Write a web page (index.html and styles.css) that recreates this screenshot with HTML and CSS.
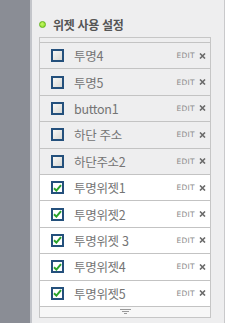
FILE: index.html
```html
<!DOCTYPE html>
<html lang="ko">
<head>
    <meta charset="UTF-8">
    <title>위젯 사용 설정</title>
    <link rel="stylesheet" href="styles.css">
</head>
<body>
    <div class="sidebar"></div>
    <div class="panel">
        <div class="title"><span class="dot"></span>위젯 사용 설정</div>
        <div class="widget-box">
            <ul class="widget-list">
                <li class="row"><span class="check"></span><span class="name">투명4</span><span class="edit">EDIT</span><span class="del"><svg width="7" height="6" viewBox="0 0 7 6"><path d="M1 0.5L6 5.5M6 0.5L1 5.5" stroke="#6a6a6a" stroke-width="1.6"/></svg></span></li>
                <li class="row"><span class="check"></span><span class="name">투명5</span><span class="edit">EDIT</span><span class="del"><svg width="7" height="6" viewBox="0 0 7 6"><path d="M1 0.5L6 5.5M6 0.5L1 5.5" stroke="#6a6a6a" stroke-width="1.6"/></svg></span></li>
                <li class="row"><span class="check"></span><span class="name">button1</span><span class="edit">EDIT</span><span class="del"><svg width="7" height="6" viewBox="0 0 7 6"><path d="M1 0.5L6 5.5M6 0.5L1 5.5" stroke="#6a6a6a" stroke-width="1.6"/></svg></span></li>
                <li class="row"><span class="check"></span><span class="name">하단 주소</span><span class="edit">EDIT</span><span class="del"><svg width="7" height="6" viewBox="0 0 7 6"><path d="M1 0.5L6 5.5M6 0.5L1 5.5" stroke="#6a6a6a" stroke-width="1.6"/></svg></span></li>
                <li class="row"><span class="check"></span><span class="name">하단주소2</span><span class="edit">EDIT</span><span class="del"><svg width="7" height="6" viewBox="0 0 7 6"><path d="M1 0.5L6 5.5M6 0.5L1 5.5" stroke="#6a6a6a" stroke-width="1.6"/></svg></span></li>
                <li class="row on"><span class="check"><svg width="9" height="8" viewBox="0 0 9 8"><path d="M1 4.2L3.4 6.6L8 1.2" fill="none" stroke="#2aa32a" stroke-width="2"/></svg></span><span class="name">투명위젯1</span><span class="edit">EDIT</span><span class="del"><svg width="7" height="6" viewBox="0 0 7 6"><path d="M1 0.5L6 5.5M6 0.5L1 5.5" stroke="#6a6a6a" stroke-width="1.6"/></svg></span></li>
                <li class="row on"><span class="check"><svg width="9" height="8" viewBox="0 0 9 8"><path d="M1 4.2L3.4 6.6L8 1.2" fill="none" stroke="#2aa32a" stroke-width="2"/></svg></span><span class="name">투명위젯2</span><span class="edit">EDIT</span><span class="del"><svg width="7" height="6" viewBox="0 0 7 6"><path d="M1 0.5L6 5.5M6 0.5L1 5.5" stroke="#6a6a6a" stroke-width="1.6"/></svg></span></li>
                <li class="row on"><span class="check"><svg width="9" height="8" viewBox="0 0 9 8"><path d="M1 4.2L3.4 6.6L8 1.2" fill="none" stroke="#2aa32a" stroke-width="2"/></svg></span><span class="name">투명위젯 3</span><span class="edit">EDIT</span><span class="del"><svg width="7" height="6" viewBox="0 0 7 6"><path d="M1 0.5L6 5.5M6 0.5L1 5.5" stroke="#6a6a6a" stroke-width="1.6"/></svg></span></li>
                <li class="row on"><span class="check"><svg width="9" height="8" viewBox="0 0 9 8"><path d="M1 4.2L3.4 6.6L8 1.2" fill="none" stroke="#2aa32a" stroke-width="2"/></svg></span><span class="name">투명위젯4</span><span class="edit">EDIT</span><span class="del"><svg width="7" height="6" viewBox="0 0 7 6"><path d="M1 0.5L6 5.5M6 0.5L1 5.5" stroke="#6a6a6a" stroke-width="1.6"/></svg></span></li>
                <li class="row on"><span class="check"><svg width="9" height="8" viewBox="0 0 9 8"><path d="M1 4.2L3.4 6.6L8 1.2" fill="none" stroke="#2aa32a" stroke-width="2"/></svg></span><span class="name">투명위젯5</span><span class="edit">EDIT</span><span class="del"><svg width="7" height="6" viewBox="0 0 7 6"><path d="M1 0.5L6 5.5M6 0.5L1 5.5" stroke="#6a6a6a" stroke-width="1.6"/></svg></span></li>
            </ul>
            <div class="box-foot">
                <svg width="11" height="6" viewBox="0 0 11 6"><path d="M0 0.5H11M2 2.5H9M4 4.5H7" stroke="#9a9a9a" stroke-width="1"/></svg>
            </div>
        </div>
    </div>
    <div class="rest"></div>
</body>
</html>
```

FILE: styles.css
```css
body {
    margin: 0;
    display: flex;
    height: 323px;
    overflow: hidden;
    font-family: "Noto Sans CJK KR", "Noto Sans", sans-serif;
    background: white;
}
.sidebar {
    width: 30px;
    background: #8a8d95;
    border-right: 2px solid #c3c5ca;
    flex-shrink: 0;
}
.panel {
    width: 193px;
    flex-shrink: 0;
    background: #eeeeef;
    border-right: 1px solid #c9c9cb;
    padding: 17px 13px 0 7px;
    box-sizing: border-box;
}
.title {
    display: flex;
    align-items: center;
    height: 14px;
    font-size: 12px;
    font-weight: bold;
    color: #555;
    letter-spacing: -0.3px;
}
.dot {
    width: 5px;
    height: 5px;
    border-radius: 50%;
    background: radial-gradient(circle at 40% 40%, #c6f56a, #86dc1e);
    border: 1px solid #62b41a;
    margin-right: 7px;
}
.widget-box {
    margin-top: 6px;
    border: 1px solid #c6c6c6;
    padding-top: 4px;
}
.widget-list {
    list-style: none;
    margin: 0;
    padding: 0;
    border-top: 1px solid #c3c3c3;
}
.row {
    display: flex;
    align-items: center;
    height: 26.4px;
    box-sizing: border-box;
    border-bottom: 1px solid #c3c3c3;
    padding: 0 4px 0 11px;
    background: #eeeeef;
}
.row.on {
    background: white;
}
.check {
    width: 13px;
    height: 13px;
    box-sizing: border-box;
    border: 2px solid #24507c;
    background: linear-gradient(135deg, #f8f8f6, #d8d8d4);
    display: flex;
    align-items: center;
    justify-content: center;
    margin-right: 10px;
}
.row.on .check {
    background: white;
}
.name {
    flex: 1;
    font-size: 12.5px;
    color: #747474;
    letter-spacing: -0.3px;
}
.edit {
    font-family: "DejaVu Sans", sans-serif;
    font-size: 7.5px;
    color: #8a8a8a;
    letter-spacing: 0.3px;
    margin-right: 4px;
}
.del {
    display: flex;
}
.box-foot {
    height: 10px;
    background: #f7f7f7;
    display: flex;
    justify-content: center;
    align-items: center;
}
.rest {
    flex: 1;
}
```
